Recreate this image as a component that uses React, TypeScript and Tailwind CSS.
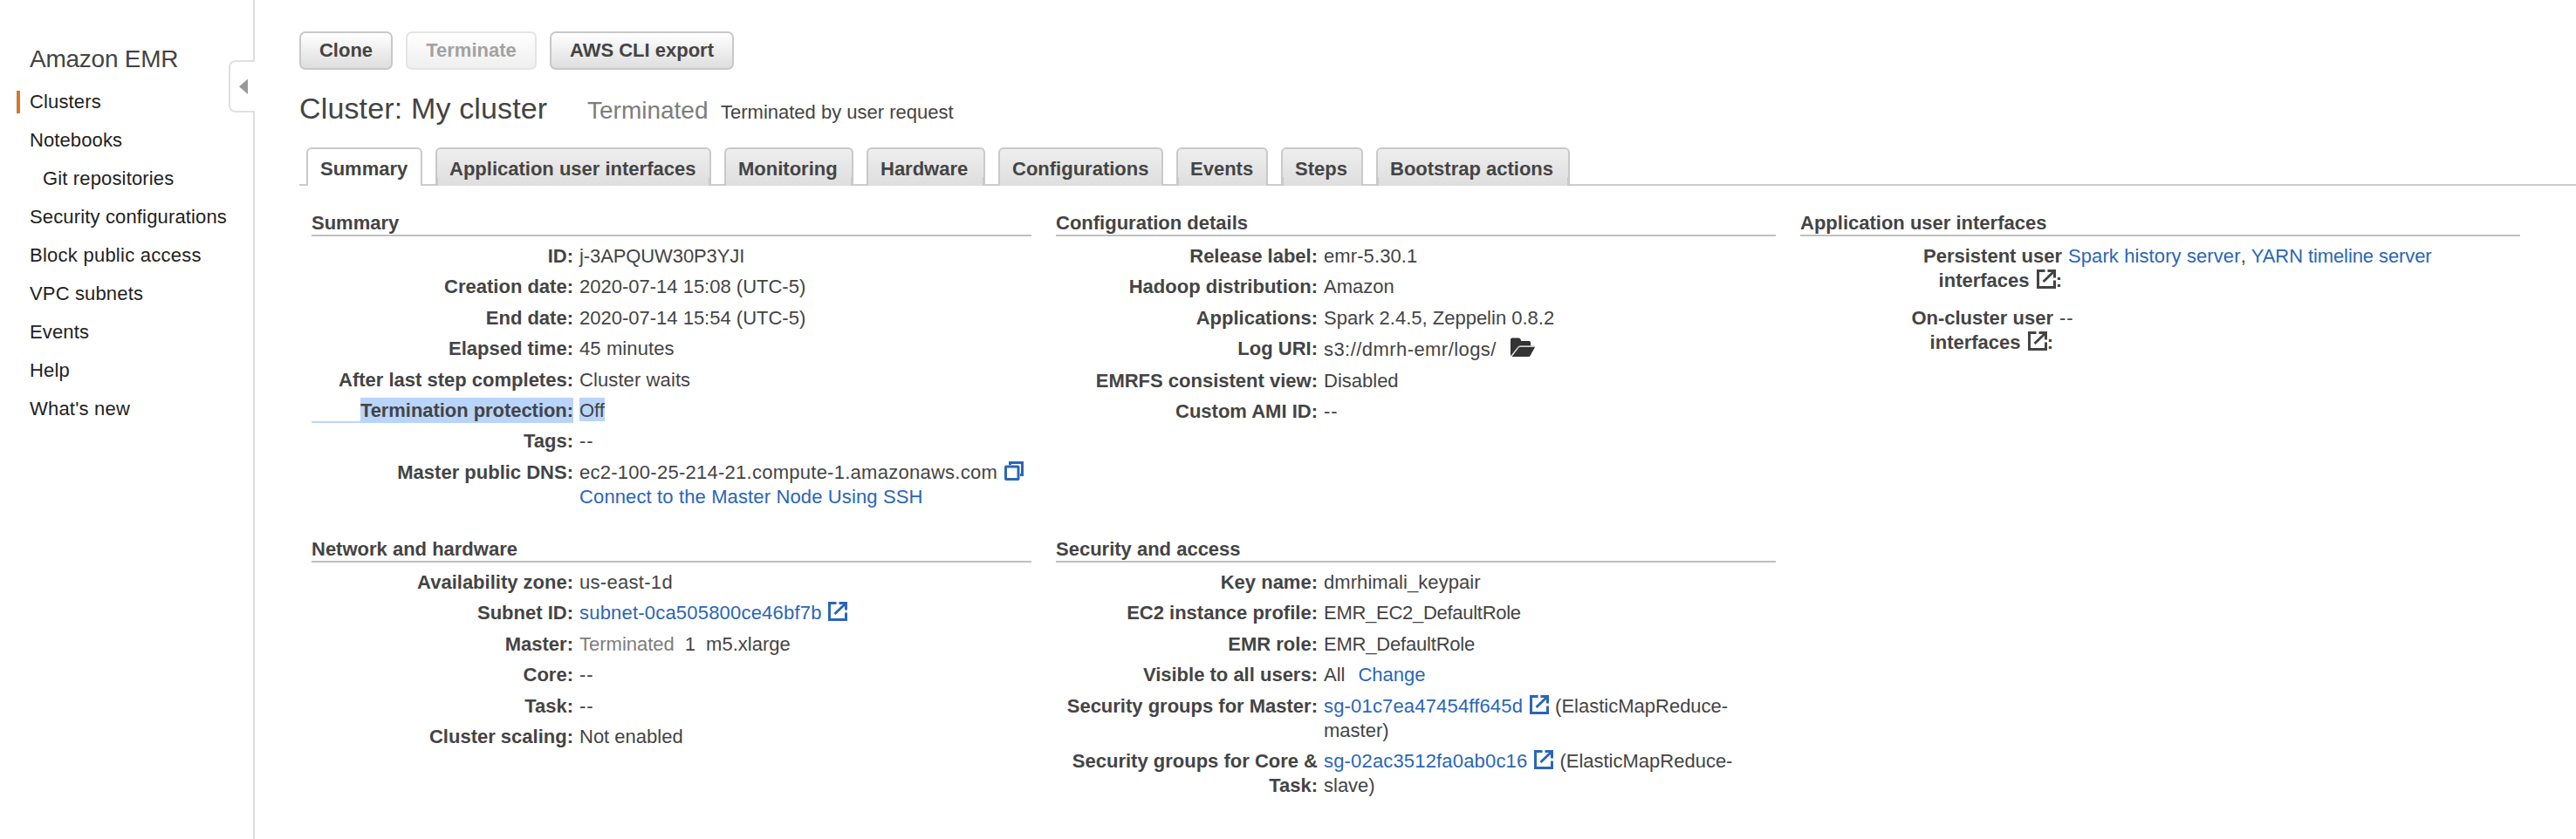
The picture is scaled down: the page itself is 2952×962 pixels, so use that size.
import React, { ReactNode } from "react";

const navItems = [
  { label: "Clusters", cls: "pl-[34px] tracking-[0.15px]", active: true },
  { label: "Notebooks", cls: "pl-[34px] tracking-[0.1px]" },
  { label: "Git repositories", cls: "pl-[49px] tracking-[0.15px]" },
  { label: "Security configurations", cls: "pl-[34px] tracking-[0.15px]" },
  { label: "Block public access", cls: "pl-[34px] tracking-[0.25px]" },
  { label: "VPC subnets", cls: "pl-[34px] tracking-[0.15px]" },
  { label: "Events", cls: "pl-[34px] tracking-[0.15px]" },
  { label: "Help", cls: "pl-[34px] tracking-[0.15px]" },
  { label: "What's new", cls: "pl-[34px] tracking-[0.2px]" },
];

const tabs = [
  { label: "Summary", cls: "w-[133px]", active: true },
  { label: "Application user interfaces", cls: "w-[316px]", left: true, right: true },
  { label: "Monitoring", cls: "w-[148px]", right: true },
  { label: "Hardware", cls: "w-[136px]", right: true },
  { label: "Configurations", cls: "w-[189px]" },
  { label: "Events", cls: "w-[105px]", left: true },
  { label: "Steps", cls: "w-[94px]", left: true },
  { label: "Bootstrap actions", cls: "w-[222px]", left: true, right: true },
];

function ExternalIcon({ className = "" }: { className?: string }) {
  return (
    <svg viewBox="0 0 22 22" className={`inline-block h-[22px] w-[22px] align-[-2px] ${className}`} fill="none" stroke="currentColor" strokeWidth="3">
      <path d="M9.500 1.500H1.500v19h19V12.500" />
      <path d="M12.500 1.500h8v8M19.500 2.500L7.500 14" />
    </svg>
  );
}

function CopyIcon() {
  return (
    <svg viewBox="0 0 22 22" className="ml-[8px] inline-block h-[22px] w-[22px] align-[-2px] text-[#2a66b8]" fill="none" stroke="currentColor" strokeWidth="3">
      <path d="M6.500 4V1.500h14v14H18" />
      <rect x="1.500" y="6" width="14.500" height="14.500" rx="0.500" />
    </svg>
  );
}

function FolderIcon() {
  return (
    <svg viewBox="0 0 30 24" className="ml-[15px] inline-block h-[24px] w-[30px] align-[-2px]">
      <path d="M1 21V3.500Q1 1.500 3 1.500h7.500q1.500 0 2 1.500l.6 2h9q2 0 2 2v3.500H12.500q-2 0-3.200 1.700L1.500 22z" fill="#333" />
      <path d="M2.500 23L10 13q.8-1 2-1h17l-5.500 10q-.6 1-1.800 1z" fill="#333" />
      <path d="M2 21.500L9.400 12q.8-1 2-1H29" stroke="#aaa" strokeWidth="1" fill="none" />
    </svg>
  );
}

function Link({ children, cls = "" }: { children: ReactNode; cls?: string }) {
  return <a className={`text-[#2a66b8] ${cls}`}>{children}</a>;
}

function Row({ label, children, cls = "", labelCls = "w-[300px]" }: { label: ReactNode; children: ReactNode; cls?: string; labelCls?: string }) {
  return (
    <div className="flex pb-[7.4px] leading-[28px]">
      <div className={`${labelCls} shrink-0 text-right font-bold`}>{label}</div>
      <div className={`ml-[7px] whitespace-nowrap ${cls}`}>{children}</div>
    </div>
  );
}

function Section({ title, children }: { title: string; children: ReactNode }) {
  return (
    <section>
      <h2 className="h-[30px] border-b-2 border-[#bfbfbf] font-bold leading-[30px]">{title}</h2>
      <div className="pt-[9px]">{children}</div>
    </section>
  );
}

export default function App() {
  return (
    <div className="flex h-[962px] w-[2952px] overflow-hidden bg-white font-['Liberation_Sans',Arial,sans-serif] text-[22px] text-[#444]">
      <aside className="relative w-[292px] shrink-0 border-r-2 border-[#ddd] pt-[46px]">
        <div className="pl-[34px] text-[28px] leading-[44px] tracking-[-0.25px]">Amazon EMR</div>
        <nav className="mt-[5px] text-[#222]">
          {navItems.map((n) => (
            <div key={n.label} className="flex h-[44px] items-center leading-[44px]">
              <span className={n.active ? "-mr-[23px] ml-[19px] h-[26px] w-[4px] bg-[#d5782f]" : "w-0"} />
              <span className={`whitespace-nowrap ${n.cls}`}>{n.label}</span>
            </div>
          ))}
        </nav>
        <button className="absolute -right-[2px] top-[69px] flex h-[60px] w-[30px] items-center justify-center rounded-l-[8px] border-2 border-r-0 border-[#e0e0e0] bg-white">
          <svg viewBox="0 0 10 18" className="ml-[2px] h-[18px] w-[10px]">
            <path d="M10 0.500v17.500L0 9.200z" fill="#999" />
          </svg>
        </button>
      </aside>

      <main className="min-w-0 flex-1 pt-[36px]">
        <div className="flex gap-[15px] pl-[51px] font-bold leading-[40px]">
          <button className="h-[44px] w-[107px] rounded-[7px] border-2 border-[#c8c8c8] bg-linear-to-b from-white to-[#dedede]">Clone</button>
          <button className="h-[44px] w-[150px] rounded-[7px] border-2 border-[#e4e4e4] bg-linear-to-b from-white to-[#efefef] text-[#a2a2a2]">Terminate</button>
          <button className="h-[44px] w-[211px] rounded-[7px] border-2 border-[#c8c8c8] bg-linear-to-b from-white to-[#dedede]">AWS CLI export</button>
        </div>

        <div className="mt-[22px] flex h-[44px] items-baseline whitespace-nowrap pl-[51px] leading-[44px]">
          <h1 className="w-[330px] text-[34px] tracking-[0.15px]">Cluster: My cluster</h1>
          <span className="w-[153px] text-[28px] text-[#7d7d7d]">Terminated</span>
          <span>Terminated by user request</span>
        </div>

        <div className="ml-[51px] mt-[23px] flex h-[44px] bg-[linear-gradient(#ccc,#ccc)] bg-[length:100%_2px] bg-bottom bg-no-repeat pl-[8px] font-bold">
          <div className="flex gap-[15px]">
            {tabs.map((t) => (
              <div
                key={t.label}
                className={`relative h-[44px] whitespace-nowrap rounded-t-[6px] border-2 border-b-0 border-[#c9c9c9] pl-[14px] pt-[9px] leading-[28px] ${t.cls} ${t.active ? "bg-white" : "bg-linear-to-b from-[#eee] to-[#dedede]"}`}
              >
                {t.label}
                {t.left && <span className="absolute bottom-0 left-0 h-[10px] w-px bg-[#c9c9c9]" />}
                {t.right && <span className="absolute bottom-0 right-0 h-[10px] w-px bg-[#c9c9c9]" />}
              </div>
            ))}
          </div>
        </div>

        <div className="grid grid-cols-[825px_825px_825px] grid-rows-[374px_auto] gap-x-[28px] pl-[65px] pt-[28px]">
          <Section title="Summary">
            <Row label="ID:" cls="tracking-[-0.1px]">j-3APQUW30P3YJI</Row>
            <Row label="Creation date:">2020-07-14 15:08 (UTC-5)</Row>
            <Row label="End date:">2020-07-14 15:54 (UTC-5)</Row>
            <Row label="Elapsed time:" cls="tracking-[0.1px]">45 minutes</Row>
            <Row label="After last step completes:" cls="tracking-[0.1px]">Cluster waits</Row>
            <Row
              labelCls="w-[300px] bg-[linear-gradient(#b9d5fb,#b9d5fb)] bg-[length:100%_2px] bg-bottom bg-no-repeat tracking-[-0.05px]"
              label={<span className="bg-[#b9d5fb] pt-[2px]">Termination protection:</span>}
            >
              <span className="bg-[#b9d5fb] pt-[2px]">Off</span>
            </Row>
            <Row label="Tags:" cls="tracking-[1px]">--</Row>
            <Row label="Master public DNS:">
              <span className="tracking-[0.26px]">ec2-100-25-214-21.compute-1.amazonaws.com</span>
              <CopyIcon />
              <br />
              <Link cls="tracking-[0.13px]">Connect to the Master Node Using SSH</Link>
            </Row>
          </Section>

          <Section title="Configuration details">
            <Row label="Release label:" cls="tracking-[0.1px]">emr-5.30.1</Row>
            <Row label="Hadoop distribution:">Amazon</Row>
            <Row label="Applications:">Spark 2.4.5, Zeppelin 0.8.2</Row>
            <Row label="Log URI:">
              <span className="tracking-[0.44px]">s3://dmrh-emr/logs/</span>
              <FolderIcon />
            </Row>
            <Row label="EMRFS consistent view:">Disabled</Row>
            <Row label="Custom AMI ID:" cls="tracking-[1px]">--</Row>
          </Section>

          <Section title="Application user interfaces">
            <Row label={<>Persistent user<br />interfaces <ExternalIcon className="ml-[2px]" />:</>}>
              <Link cls="tracking-[0.1px]">Spark history server</Link>, <Link cls="tracking-[-0.1px]">YARN timeline server</Link>
            </Row>
            <div className="h-[8px]" />
            <Row labelCls="w-[290px]" label={<>On-cluster user<br />interfaces <ExternalIcon className="ml-[2px]" />:</>} cls="tracking-[1px]">--</Row>
          </Section>

          <Section title="Network and hardware">
            <Row label="Availability zone:" cls="tracking-[0.3px]">us-east-1d</Row>
            <Row label="Subnet ID:">
              <Link cls="tracking-[0.2px]">subnet-0ca505800ce46bf7b</Link>
              <ExternalIcon className="ml-[7px] text-[#2a66b8]" />
            </Row>
            <Row label="Master:">
              <span className="text-[#7d7d7d]">Terminated</span>
              <span className="ml-[12px]">1</span>
              <span className="ml-[12px]">m5.xlarge</span>
            </Row>
            <Row label="Core:" cls="tracking-[1px]">--</Row>
            <Row label="Task:" cls="tracking-[1px]">--</Row>
            <Row label="Cluster scaling:">Not enabled</Row>
          </Section>

          <Section title="Security and access">
            <Row label="Key name:" cls="tracking-[0.07px]">dmrhimali_keypair</Row>
            <Row label="EC2 instance profile:" cls="tracking-[-0.28px]">EMR_EC2_DefaultRole</Row>
            <Row label="EMR role:" cls="tracking-[-0.2px]">EMR_DefaultRole</Row>
            <Row label="Visible to all users:">
              All<Link cls="ml-[15px]">Change</Link>
            </Row>
            <Row label="Security groups for Master:">
              <Link cls="tracking-[0.17px]">sg-01c7ea47454ff645d</Link>
              <ExternalIcon className="ml-[8px] mr-[7px] text-[#2a66b8]" />
              (ElasticMapReduce-
              <br />
              master)
            </Row>
            <Row label={<>Security groups for Core &amp;<br />Task:</>}>
              <Link cls="tracking-[0.17px]">sg-02ac3512fa0ab0c16</Link>
              <ExternalIcon className="ml-[8px] mr-[7px] text-[#2a66b8]" />
              (ElasticMapReduce-
              <br />
              slave)
            </Row>
          </Section>
        </div>
      </main>
    </div>
  );
}
